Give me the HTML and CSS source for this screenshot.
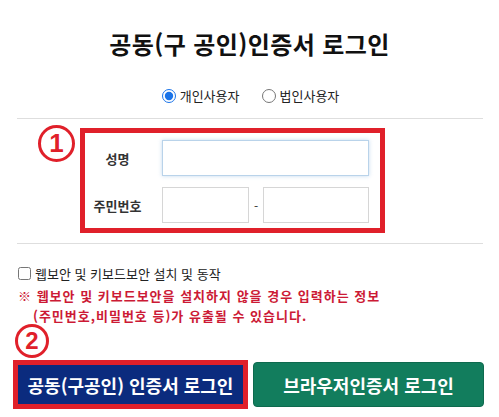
FILE: index.html
```html
<!DOCTYPE html>
<html lang="ko">
<head>
<meta charset="utf-8">
<title>공동(구 공인)인증서 로그인</title>
<link rel="stylesheet" href="styles.css">
</head>
<body>
<div class="page">
  <h1 class="title">공동(구 공인)인증서 로그인</h1>
  <div class="user-type">
    <label class="radio"><input type="radio" name="ut" checked><span>개인사용자</span></label>
    <label class="radio"><input type="radio" name="ut"><span>법인사용자</span></label>
  </div>
  <section class="form-section">
    <span class="badge badge-1">1</span>
    <div class="form-box">
      <div class="form-row">
        <span class="form-label">성명</span>
        <input class="field field-name focused" type="text">
      </div>
      <div class="form-row">
        <span class="form-label">주민번호</span>
        <input class="field field-rrn1" type="text">
        <span class="dash">-</span>
        <input class="field field-rrn2" type="password">
      </div>
    </div>
  </section>
  <label class="check"><input type="checkbox"><span>웹보안 및 키보드보안 설치 및 동작</span></label>
  <p class="warn">※ 웹보안 및 키보드보안을 설치하지 않을 경우 입력하는 정보<br><span class="indent">(주민번호,비밀번호 등)가 유출될 수 있습니다.</span></p>
  <span class="badge badge-2">2</span>
  <div class="buttons">
    <button class="btn btn-cert">공동(구공인) 인증서 로그인</button>
    <button class="btn btn-browser">브라우저인증서 로그인</button>
  </div>
</div>
</body>
</html>
```
FILE: styles.css
```css
* { box-sizing: border-box; }
html, body { margin: 0; padding: 0; background: #fff; }
body {
  font-family: "Noto Sans CJK KR", "Noto Sans", sans-serif;
  color: #222;
}
.page { width: 499px; }

.title {
  margin: 0;
  padding-top: 29px;
  font-size: 24px;
  line-height: 30px;
  font-weight: 700;
  letter-spacing: 0.4px;
  color: #111;
  text-align: center;
}

.user-type {
  margin-top: 27px;
  height: 20px;
  display: flex;
  justify-content: center;
  gap: 22px;
  padding-left: 2px;
}
.radio {
  display: flex;
  align-items: center;
  gap: 4px;
  font-size: 13px;
  line-height: 20px;
  color: #222;
}
.radio input {
  margin: 0;
  width: 14px;
  height: 14px;
  accent-color: #1a73e8;
}

.form-section {
  margin: 12px 16px 0 17px;
  border-top: 1px solid #dedede;
  border-bottom: 1px solid #dedede;
  padding: 6px 0 10px 21px;
  display: flex;
  align-items: flex-start;
  gap: 5px;
}

.badge {
  display: flex;
  align-items: center;
  justify-content: center;
  border: 3px solid #e0202a;
  border-radius: 50%;
  color: #e0202a;
  font-family: "Liberation Sans", Arial, sans-serif;
  font-weight: 700;
}
.badge-1 {
  width: 37px;
  height: 37px;
  font-size: 26px;
}
.badge-2 {
  width: 34px;
  height: 34px;
  font-size: 24px;
  margin: -2px 0 0 15px;
}

.form-box {
  margin-top: 3px;
  width: 305px;
  border: 5px solid #e0202a;
  padding: 7px 11px 5px 0;
  display: flex;
  flex-direction: column;
  gap: 11px;
}
.form-row {
  display: flex;
  align-items: center;
  height: 36px;
}
.form-label {
  width: 65px;
  margin-right: 12px;
  text-align: center;
  font-size: 13px;
  font-weight: 700;
  color: #333;
}
.field {
  height: 36px;
  border: 1px solid #d6d6d6;
  background: #fff;
  padding: 0 6px;
  font-size: 13px;
  outline: none;
}
.field-name { width: 207px; }
.field.focused {
  border-color: #b9d3ea;
  box-shadow: 0 0 4px rgba(120, 170, 220, 0.45);
}
.field-rrn1 { width: 87px; }
.dash {
  width: 14px;
  text-align: center;
  font-size: 12px;
  color: #333;
}
.field-rrn2 { width: 106px; }

.check {
  margin: 20px 0 0 18px;
  display: flex;
  align-items: center;
  gap: 4px;
  height: 18px;
  font-size: 13px;
  color: #222;
}
.check input {
  margin: 0;
  width: 13px;
  height: 13px;
}

.warn {
  margin: 4px 0 0 18px;
  font-size: 13px;
  line-height: 20px;
  font-weight: 700;
  color: #cc1a35;
  letter-spacing: 1px;
}
.indent { padding-left: 15px; }

.buttons {
  margin: 2px 0 0 13px;
  display: flex;
  align-items: center;
  gap: 5px;
}
.btn {
  font-family: "Noto Sans CJK KR", "Noto Sans", sans-serif;
  font-size: 18px;
  font-weight: 700;
  color: #fff;
  cursor: pointer;
  padding: 0;
}
.btn-cert {
  width: 235px;
  height: 49px;
  background: #0b2b7e;
  border: 5px solid #e0202a;
}
.btn-browser {
  width: 231px;
  height: 45px;
  background: #127d5d;
  border: 1px solid #0e6a4e;
  border-radius: 4px;
}
```
